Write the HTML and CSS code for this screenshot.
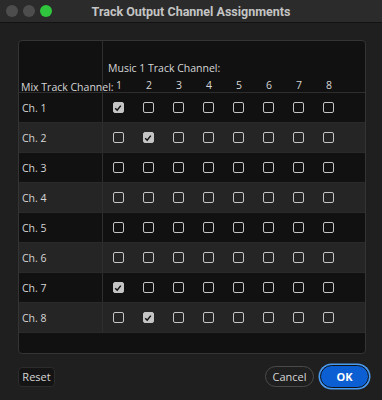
FILE: index.html
```html
<!DOCTYPE html>
<html lang="en">
<head>
    <meta charset="UTF-8">
    <title>Track Output Channel Assignments</title>
    <link rel="stylesheet" href="styles.css">
</head>
<body>
    <div class="window">
        <div class="titlebar">
            <div class="lights">
                <span class="light"></span>
                <span class="light"></span>
                <span class="light green"></span>
            </div>
            <div class="title">Track Output Channel Assignments</div>
        </div>

        <div class="content">
            <div class="panel">
                <div class="grid">
                    <div class="corner">Mix Track Channel:</div>
                    <div class="head">
                        <div class="head-title">Music 1 Track Channel:</div>
                        <div class="nums">
                            <span>1</span><span>2</span><span>3</span><span>4</span>
                            <span>5</span><span>6</span><span>7</span><span>8</span>
                        </div>
                    </div>
                </div>
                <div id="rows"></div>
                <div class="panel-fill"></div>
            </div>

            <div class="buttons">
                <button class="btn reset">Reset</button>
                <div class="right">
                    <button class="btn cancel">Cancel</button>
                    <button class="btn ok">OK</button>
                </div>
            </div>
        </div>
    </div>

    <script>
        // which output channel each mix channel is routed to
        var checked = { 1: [1], 2: [2], 7: [1], 8: [2] };
        var rows = document.getElementById('rows');
        for (var r = 1; r <= 8; r++) {
            var row = document.createElement('div');
            row.className = 'row' + (r % 2 === 0 ? ' alt' : '');
            var label = document.createElement('div');
            label.className = 'label';
            label.textContent = 'Ch. ' + r;
            row.appendChild(label);
            var cells = document.createElement('div');
            cells.className = 'cells';
            for (var c = 1; c <= 8; c++) {
                var cell = document.createElement('span');
                var box = document.createElement('span');
                box.className = 'box';
                if ((checked[r] || []).indexOf(c) !== -1) {
                    box.className += ' on';
                    box.innerHTML = '<svg width="8" height="8" viewBox="0 0 8 8"><path d="M1.2 4.2 L3.2 6.2 L6.8 1.6" fill="none" stroke="#111" stroke-width="1.5"/></svg>';
                }
                cell.appendChild(box);
                cells.appendChild(cell);
            }
            row.appendChild(cells);
            rows.appendChild(row);
        }
    </script>
</body>
</html>
```

FILE: styles.css
```css
* {
    margin: 0;
    padding: 0;
    box-sizing: border-box;
}

body {
    font-family: "Open Sans", "Noto Sans", sans-serif;
    background: #1e1e1e;
    color: #d6d6d6;
    width: 382px;
    height: 400px;
    overflow: hidden;
}

.window {
    height: 400px;
    background: #1f1f1f;
}

.titlebar {
    height: 23px;
    background: #2b2b2b;
    border-bottom: 1px solid #121212;
    display: flex;
    align-items: center;
    position: relative;
}

.lights {
    display: flex;
    gap: 5px;
    padding-left: 6px;
}

.light {
    width: 12px;
    height: 12px;
    border-radius: 50%;
    background: #4d4d4d;
}

.light.green {
    background: #2fc63d;
}

.title {
    position: absolute;
    left: 0;
    right: 0;
    top: 4px;
    text-align: center;
    font-family: Roboto, "Open Sans", sans-serif;
    font-weight: bold;
    font-size: 12.5px;
    line-height: 15px;
    color: #c4c4c4;
}

.content {
    padding: 17px 13px 0 18px;
}

.panel {
    background: #111111;
    border: 1px solid #343434;
    border-radius: 4px;
    overflow: hidden;
    width: 348px;
}

.grid {
    display: flex;
    height: 52px;
    border-bottom: 1px solid #2e2e2e;
    line-height: 12px;
}

.corner {
    width: 84px;
    border-right: 1px solid #2e2e2e;
    font-size: 10.5px;
    line-height: 9px;
    display: flex;
    align-items: flex-end;
    padding: 0 0 0 2px;
    white-space: nowrap;
}

.head {
    display: flex;
    flex-direction: column;
    justify-content: flex-end;
    padding-bottom: 1px;
}

.head-title {
    font-size: 10.5px;
    padding-left: 5px;
    margin-bottom: 5px;
}

.nums {
    display: flex;
    font-size: 10.5px;
    padding-left: 1px;
}

.nums span {
    width: 30px;
    text-align: center;
}

.row {
    display: flex;
    height: 30px;
    border-bottom: 1px solid #2a2a2a;
}

.row.alt {
    background: #252525;
}

.label {
    width: 84px;
    border-right: 1px solid #2e2e2e;
    font-size: 10.5px;
    display: flex;
    align-items: center;
    padding-left: 3px;
}

.cells {
    display: flex;
    align-items: center;
}

.cells > span {
    width: 30px;
    display: flex;
    justify-content: center;
}

.box {
    width: 11px;
    height: 11px;
    border: 1.5px solid #c4c4c4;
    border-radius: 2px;
    display: flex;
    align-items: center;
    justify-content: center;
}

.box.on {
    background: #c4c4c4;
}

.panel-fill {
    height: 20px;
}

.buttons {
    display: flex;
    justify-content: space-between;
    align-items: center;
    margin-top: 11px;
}

.right {
    display: flex;
    align-items: center;
    gap: 6px;
}

.btn {
    font-family: "Open Sans", "Noto Sans", sans-serif;
    font-size: 11px;
    color: #d6d6d6;
    cursor: pointer;
}

.reset {
    background: #141414;
    border: 1px solid #2c2c2c;
    border-radius: 4px;
    height: 20px;
    width: 37px;
}

.cancel {
    background: transparent;
    border: 1.5px solid #4a4a4a;
    border-radius: 11px;
    height: 21px;
    width: 49px;
}

.ok {
    background: #0b5fd3;
    color: #fff;
    font-weight: bold;
    border: 1.5px solid #111;
    border-radius: 12px;
    height: 23px;
    width: 49px;
    box-shadow: 0 0 0 1.5px #4a9bf0;
}
```
